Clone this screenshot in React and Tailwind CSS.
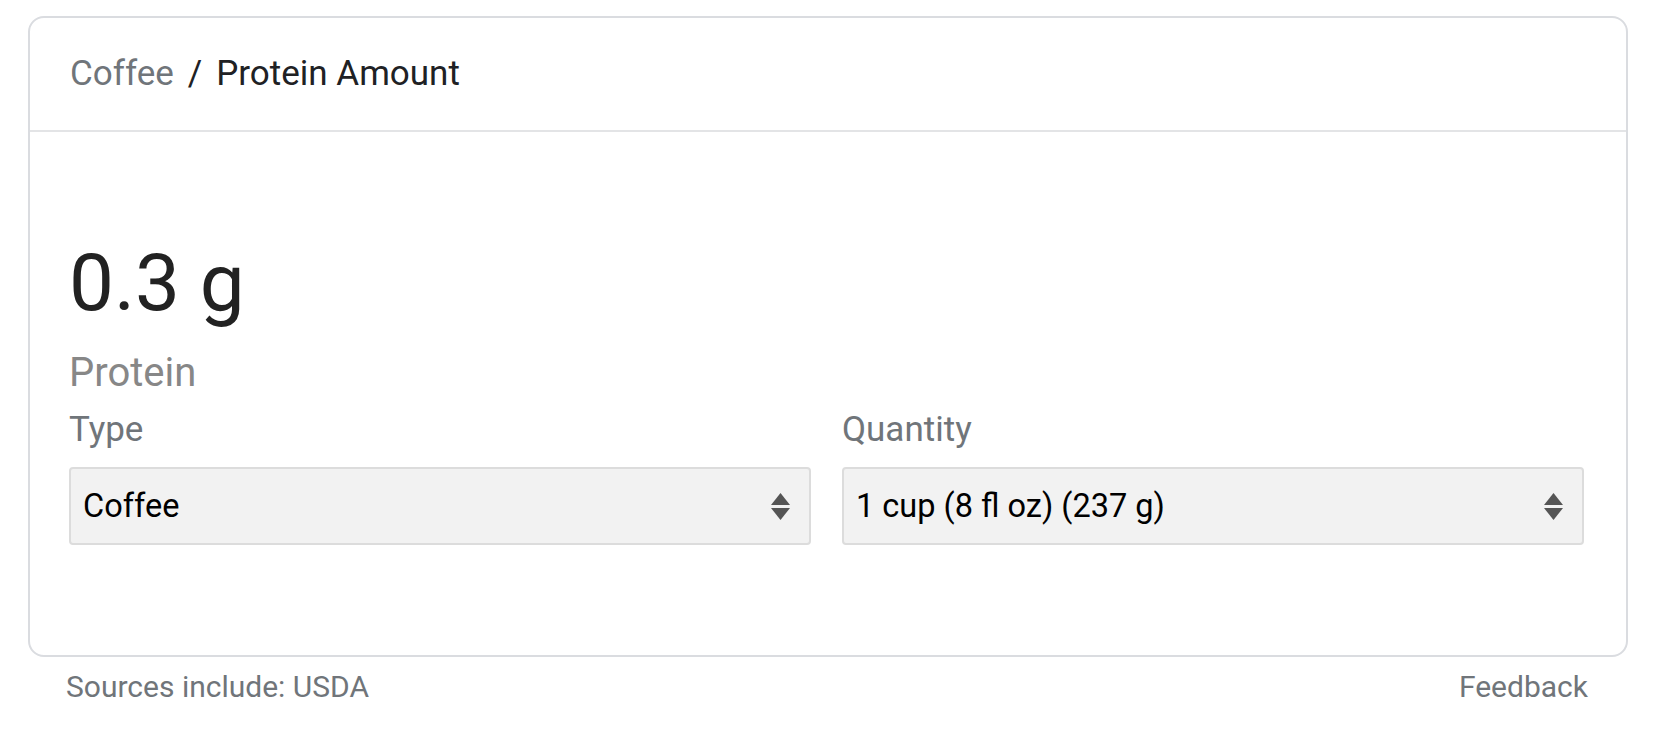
import React from "react";

function Arrows() {
  return (
    <svg width="19" height="27" viewBox="0 0 19 27" className="shrink-0">
      <polygon points="9.5,0 19,12 0,12" fill="#555555" />
      <polygon points="0,15 19,15 9.5,27" fill="#555555" />
    </svg>
  );
}

function Select({ label, value }) {
  return (
    <div className="flex flex-col">
      <div className="text-[35px] leading-[40px] text-[#70757a]">{label}</div>
      <div className="mt-[17px] h-[78px] flex items-center justify-between rounded-[4px] border-2 border-[#dcdcdc] bg-[#f2f2f2] pl-[12px] pr-[19px]">
        <span className="text-[32.5px] text-black">{value}</span>
        <Arrows />
      </div>
    </div>
  );
}

export default function App() {
  return (
    <div className="w-[1670px] h-[730px] bg-white font-[Roboto,sans-serif] overflow-hidden">
      <div className="ml-[28px] mt-[16px] w-[1600px] h-[641px] rounded-[16px] border-2 border-[#dadce0] flex flex-col">
        <div className="h-[114px] border-b-2 border-[#e3e4e6] flex items-center pl-[40px]">
          <span className="text-[35px] text-[#70757a]">Coffee</span>
          <span className="text-[35px] text-[#202124] mx-[14px]">/</span>
          <span className="text-[35px] text-[#202124]">Protein Amount</span>
        </div>
        <div className="pt-[111px] pl-[39px] pr-[42px] flex flex-col">
          <div className="text-[80px] leading-[80px] text-[#222222]">0.3 g</div>
          <div className="mt-[26px] text-[40px] leading-[48px] text-[#878787]">Protein</div>
          <div className="mt-[13px] grid grid-cols-2 gap-[31px]">
            <Select label="Type" value="Coffee" />
            <Select label="Quantity" value="1 cup (8 fl oz) (237 g)" />
          </div>
        </div>
      </div>
      <div className="ml-[28px] w-[1600px] mt-[12px] flex justify-between pl-[38px] pr-[40px] text-[30px] leading-[36px] text-[#70757a]">
        <span>Sources include: USDA</span>
        <span>Feedback</span>
      </div>
    </div>
  );
}
